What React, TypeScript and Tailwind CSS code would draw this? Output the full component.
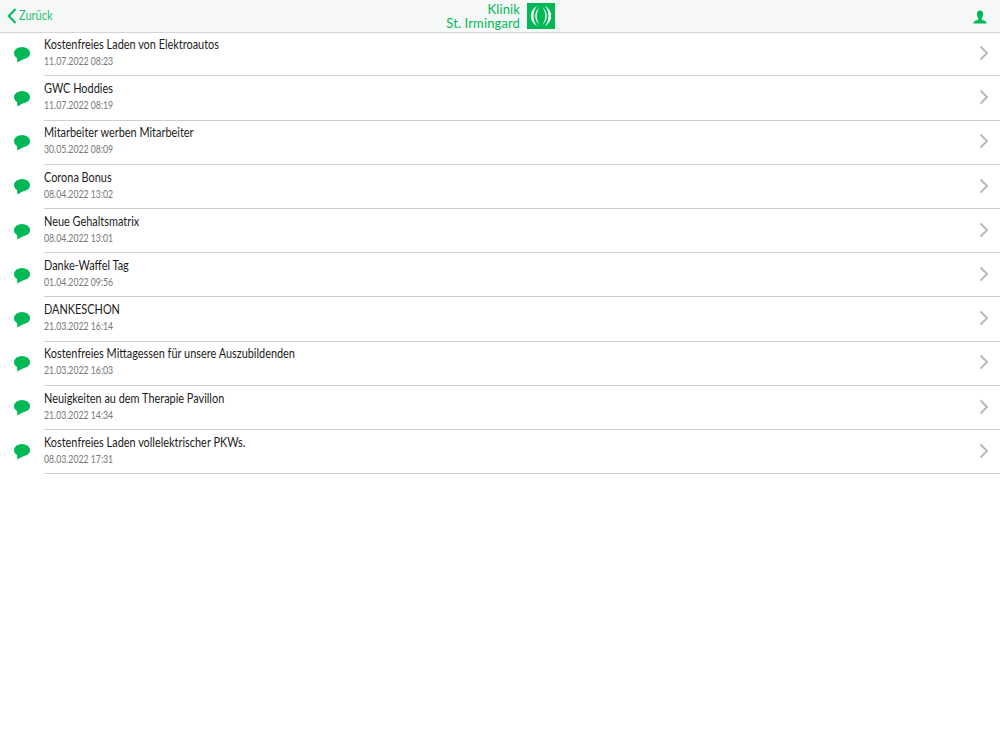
const rows: [string, string][] = [
  ["Kostenfreies Laden von Elektroautos", "11.07.2022 08:23"],
  ["GWC Hoddies", "11.07.2022 08:19"],
  ["Mitarbeiter werben Mitarbeiter", "30.05.2022 08:09"],
  ["Corona Bonus", "08.04.2022 13:02"],
  ["Neue Gehaltsmatrix", "08.04.2022 13:01"],
  ["Danke-Waffel Tag", "01.04.2022 09:56"],
  ["DANKESCHON", "21.03.2022 16:14"],
  ["Kostenfreies Mittagessen für unsere Auszubildenden", "21.03.2022 16:03"],
  ["Neuigkeiten au dem Therapie Pavillon", "21.03.2022 14:34"],
  ["Kostenfreies Laden vollelektrischer PKWs.", "08.03.2022 17:31"],
];

function Bubble() {
  return (
    <svg width="17" height="16" viewBox="0 0 17 16" className="shrink-0">
      <ellipse cx="8" cy="6.2" rx="8" ry="6.2" fill="#00b956" />
      <path d="M3 10 L3.4 15.5 L9.5 12 Z" fill="#00b956" />
    </svg>
  );
}

function Chevron() {
  return (
    <svg width="10" height="16" viewBox="0 0 10 16" className="shrink-0 mt-[1.1px]">
      <path d="M1.5 1.5 L8 8 L1.5 14.5" fill="none" stroke="#b9b9b9" strokeWidth="2" />
    </svg>
  );
}

export default function App() {
  return (
    <div className="w-[1000px] h-[750px] bg-white overflow-hidden font-['Lato','Liberation_Sans',sans-serif]">
      <header className="relative h-[33px] bg-[#f6f8f7] border-b border-[#d4d4d4] flex items-center justify-between pl-[7px] pr-[13px]">
        <div className="flex items-center gap-[2px] text-[#1cc36e] text-[13px]">
          <svg width="10" height="16" viewBox="0 0 10 16">
            <path d="M8.5 1 L1.8 8 L8.5 15" fill="none" stroke="#00b956" strokeWidth="2" />
          </svg>
          <span className="inline-block origin-left scale-x-[0.85]">Zurück</span>
        </div>
        <div className="absolute left-[446px] top-[2px] flex items-start gap-[7px]">
          <div className="text-right text-[#00b956] text-[13px] leading-[14px] tracking-[0.12px] w-[74px]">
            <div>Klinik</div>
            <div className="whitespace-nowrap">St. Irmingard</div>
          </div>
          <svg width="28" height="26" viewBox="0 0 28 26" className="mt-[1px]">
            <rect width="28" height="26" fill="#00b956" />
            <path d="M10.5 2.5 C1.5 8 1.5 18 10.5 23.5 C5.2 18 5.2 8 10.5 2.5 Z" fill="#fff" />
            <path d="M12.5 4 C6.8 9.5 6.8 16.5 12.5 22 C8.8 16.5 8.8 9.5 12.5 4 Z" fill="#fff" />
            <path d="M17.5 2.5 C26.5 8 26.5 18 17.5 23.5 C22.8 18 22.8 8 17.5 2.5 Z" fill="#fff" />
            <path d="M15.5 4 C21.2 9.5 21.2 16.5 15.5 22 C19.2 16.5 19.2 9.5 15.5 4 Z" fill="#fff" />
          </svg>
        </div>
        <svg width="14" height="14" viewBox="0 0 14 14" className="mt-[2px]">
          <path d="M7 0.5 C9.5 0.5 10.3 2.5 10 5 C9.8 6.8 9 7.8 8.6 8.5 C8.5 9.5 9.5 10 11 10.6 C12.5 11.2 13.5 11.8 13.7 13.5 L0.3 13.5 C0.5 11.8 1.5 11.2 3 10.6 C4.5 10 5.5 9.5 5.4 8.5 C5 7.8 4.2 6.8 4 5 C3.7 2.5 4.5 0.5 7 0.5 Z" fill="#00b956" />
        </svg>
      </header>
      <ul className="-mt-[0.8px]">
        {rows.map(([title, date]) => (
          <li key={date + title} className="flex h-[44.2px]">
            <div className="w-[44px] shrink-0 flex items-center pl-[14px] pt-[1px]">
              <Bubble />
            </div>
            <div className="flex-1 flex items-center justify-between border-b border-[#cfcfcf] pr-[11px] pb-[2.6px]">
              <div className="flex flex-col items-start">
                <span className="inline-block origin-left scale-x-[0.873] whitespace-nowrap text-[12.5px] leading-[16px] text-[#1c1c1c]">{title}</span>
                <span className="inline-block origin-left scale-x-[0.83] whitespace-nowrap text-[10.5px] leading-[14px] mt-[1px] text-[#777777]">{date}</span>
              </div>
              <Chevron />
            </div>
          </li>
        ))}
      </ul>
    </div>
  );
}
